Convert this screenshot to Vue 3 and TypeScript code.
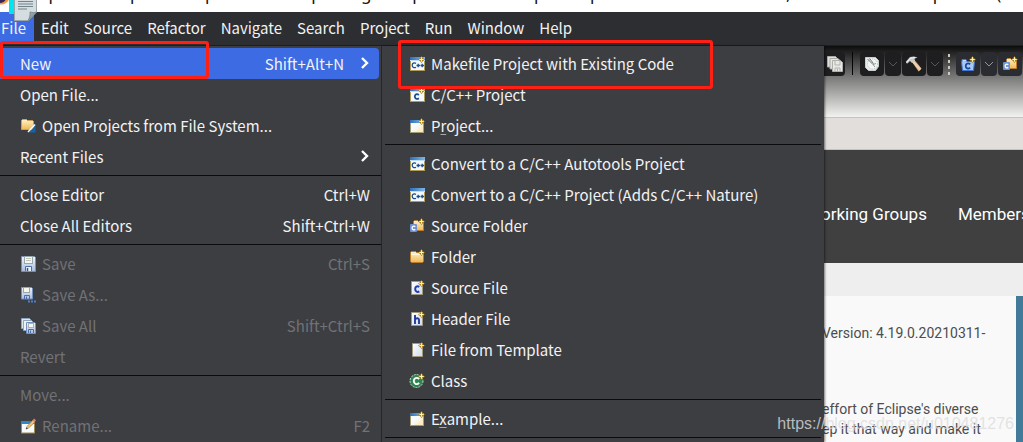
<script setup lang="ts">
interface Entry {
  label?: string
  before?: string
  key?: string
  after?: string
  icon?: string
  shortcut?: string
  arrow?: boolean
  disabled?: boolean
  active?: boolean
  separator?: boolean
}

const menus: string[] = ['File', 'Edit', 'Source', 'Refactor', 'Navigate', 'Search', 'Project', 'Run', 'Window', 'Help']

const fileMenu: Entry[] = [
  { label: 'New', shortcut: 'Shift+Alt+N', arrow: true, active: true },
  { label: 'Open File...' },
  { label: 'Open Projects from File System...', icon: 'open-projects' },
  { label: 'Recent Files', arrow: true },
  { separator: true },
  { label: 'Close Editor', shortcut: 'Ctrl+W' },
  { label: 'Close All Editors', shortcut: 'Shift+Ctrl+W' },
  { separator: true },
  { label: 'Save', icon: 'save', shortcut: 'Ctrl+S', disabled: true },
  { label: 'Save As...', icon: 'save-as', disabled: true },
  { label: 'Save All', icon: 'save-all', shortcut: 'Shift+Ctrl+S', disabled: true },
  { label: 'Revert', disabled: true },
  { separator: true },
  { label: 'Move...', disabled: true },
  { label: 'Rename...', icon: 'rename', shortcut: 'F2', disabled: true },
]

const newMenu: Entry[] = [
  { label: 'Makefile Project with Existing Code', icon: 'new-cpp' },
  { label: 'C/C++ Project', icon: 'new-c' },
  { before: 'P', key: 'r', after: 'oject...', icon: 'wizard' },
  { separator: true },
  { label: 'Convert to a C/C++ Autotools Project', icon: 'cpp' },
  { label: 'Convert to a C/C++ Project (Adds C/C++ Nature)', icon: 'cpp' },
  { label: 'Source Folder', icon: 'source-folder' },
  { label: 'Folder', icon: 'folder' },
  { label: 'Source File', icon: 'source-file' },
  { label: 'Header File', icon: 'header-file' },
  { label: 'File from Template', icon: 'file' },
  { label: 'Class', icon: 'class' },
  { separator: true },
  { before: 'E', key: 'x', after: 'ample...', icon: 'wizard' },
  { separator: true },
]
</script>

<template>
  <svg class="defs" aria-hidden="true">
    <defs>
      <linearGradient id="g-folder" x1="0" y1="0" x2="0" y2="1">
        <stop offset="0" stop-color="#fff3cf" /><stop offset="1" stop-color="#f0b850" />
      </linearGradient>
      <linearGradient id="g-title" x1="0" y1="0" x2="1" y2="0">
        <stop offset="0" stop-color="#2f6fb4" /><stop offset="1" stop-color="#7fb6e6" />
      </linearGradient>
      <linearGradient id="g-disk" x1="0" y1="0" x2="0" y2="1">
        <stop offset="0" stop-color="#eef3f8" /><stop offset="1" stop-color="#a9bde0" />
      </linearGradient>
      <linearGradient id="g-page" x1="0" y1="0" x2="1" y2="1">
        <stop offset="0" stop-color="#ffffff" /><stop offset="1" stop-color="#ccdcf0" />
      </linearGradient>
      <linearGradient id="g-win" x1="0" y1="0" x2="1" y2="1">
        <stop offset="0.4" stop-color="#f6fbff" /><stop offset="1" stop-color="#ffe9b0" />
      </linearGradient>
    </defs>
    <symbol id="i-spark" viewBox="0 0 16 16">
      <path d="M12.500 0 14 2.200 16 3.500 14 5 12.500 7 11 5 9 3.500 11 2.200Z" fill="#a87c12" />
      <path d="M12.500 1.300v4.400M10.300 3.500h4.400" stroke="#fff6a8" stroke-width="1.100" />
    </symbol>
    <symbol id="i-window" viewBox="0 0 16 16">
      <rect x="1.500" y="1.500" width="14" height="13" fill="#f4faff" stroke="#b09a58" />
      <rect x="1" y="1" width="15" height="3" fill="url(#g-title)" />
      <rect x="1" y="4" width="15" height="1" fill="#c4dcf0" />
    </symbol>
    <symbol id="i-cpp-mark" viewBox="0 0 16 16">
      <path d="M7 7.400C5 6.200 3.200 7.400 3.200 9.300s1.800 3.100 3.800 1.900M7.500 9.500h3.500M9.200 7.800v3.400M11.500 9.500h3.500M13.200 7.800v3.400" fill="none" stroke="#1f4d87" stroke-width="1.300" />
    </symbol>
    <symbol id="i-cpp" viewBox="0 0 16 16"><use href="#i-window" /><use href="#i-cpp-mark" /></symbol>
    <symbol id="i-new-cpp" viewBox="0 0 16 16"><use href="#i-window" /><use href="#i-cpp-mark" /><use href="#i-spark" /></symbol>
    <symbol id="i-new-c" viewBox="0 0 16 16">
      <use href="#i-window" />
      <path d="M9.900 8C7.800 6.300 5.800 7.500 5.800 9.500s2 3.300 4.100 1.700" fill="none" stroke="#1f4d87" stroke-width="1.800" />
      <use href="#i-spark" />
    </symbol>
    <symbol id="i-wizard" viewBox="0 0 16 16">
      <rect x="1.500" y="2.500" width="13" height="12" fill="url(#g-win)" stroke="#a39a78" />
      <path d="M5 14c5-1 8-4 9-8v8Z" fill="#fbecc0" />
      <rect x="1" y="2" width="13" height="3" fill="url(#g-title)" />
      <use href="#i-spark" />
    </symbol>
    <symbol id="i-folder-base" viewBox="0 0 16 16">
      <path d="M1.500 12.500v-9l1-1h4l1 1h6l1 1v8l-1 1h-11Z" fill="url(#g-folder)" stroke="#bd7b2c" />
      <path d="M2 5.500h12" stroke="#fff8df" />
    </symbol>
    <symbol id="i-folder" viewBox="0 0 16 16"><use href="#i-folder-base" /><use href="#i-spark" /></symbol>
    <symbol id="i-source-folder" viewBox="0 0 16 16">
      <path d="M4.500 12.500v-9l1-1h3l1 1h4l1 1v8Z" fill="url(#g-folder)" stroke="#bd7b2c" />
      <rect x="1" y="6" width="7" height="8" rx="1" fill="#6f92d2" />
      <path d="M6.300 8.600C4.400 7.400 3.100 8.600 3.100 10s1.300 2.600 3.200 1.400" fill="none" stroke="#fff" stroke-width="1.300" />
      <use href="#i-spark" />
    </symbol>
    <symbol id="i-open-projects" viewBox="0 0 16 16">
      <path d="M1.500 11.500v-9l1-1h4l1 1h5l1 1v8Z" fill="url(#g-folder)" stroke="#d4a050" />
      <path d="M9 14.500 15.500 7v7.500Z" fill="#1763a8" />
      <path d="M8 14 15 6.500" stroke="#f8fbff" stroke-width="1.500" />
    </symbol>
    <symbol id="i-save" viewBox="0 0 16 16">
      <path d="M1.500 .500h13l1 1v14h-14Z" fill="url(#g-disk)" stroke="#738fbd" />
      <rect x="4.500" y=".500" width="8" height="7" fill="#f5f7ee" stroke="#9aa6aa" />
      <path d="M6 2.500h5M6 4.500h5" stroke="#bdc5bd" />
      <path d="M5.500 15v-4.500h6V15" fill="#e9f0fa" stroke="#4d6fa8" />
      <path d="M7.500 12v3" stroke="#35558f" stroke-width="1.500" />
    </symbol>
    <symbol id="i-save-as" viewBox="0 0 16 16">
      <path d="M1.500 .500h10l1 1v10.500h-11Z" fill="url(#g-disk)" stroke="#738fbd" />
      <rect x="3.500" y=".500" width="6" height="5" fill="#f5f7ee" stroke="#9aa6aa" />
      <path d="M4.500 12V8.500h5V12M6.500 9.500V12" fill="none" stroke="#4d6fa8" />
      <path d="M8 14.500h2M11 14.500h2M14 14.500h2" stroke="#4c7ed0" stroke-width="2" />
    </symbol>
    <symbol id="i-save-all" viewBox="0 0 16 16">
      <path d="M1.500 .500h8l1 1v9h-9Z" fill="#dce6ef" stroke="#8fa6bd" />
      <path d="M3.500 2.500h8l1 1v9h-9Z" fill="#eef2f2" stroke="#8fa6bd" />
      <path d="M6.500 4.500h8l1 1v10h-9Z" fill="url(#g-disk)" stroke="#738fbd" />
      <rect x="8.500" y="5.500" width="5" height="4" fill="#f5f7ee" stroke="#aab4b6" />
      <path d="M8.500 15v-3.500h5V15M10.500 12.500V15" fill="none" stroke="#4d6fa8" />
    </symbol>
    <symbol id="i-rename" viewBox="0 0 16 16">
      <rect x="1.500" y="3.500" width="13" height="11.500" fill="#f4fbff" stroke="#a08a55" />
      <rect x="1" y="3" width="14" height="3" fill="#2e86c8" />
      <path d="M6 11 7 8.500 13 2l2 2-6.500 6Z" fill="#f3c678" stroke="#a5763a" stroke-width=".700" />
      <path d="M12.500 2.500 14 .500l2 1.700-1.500 2Z" fill="#d9807a" />
      <path d="m6 11.300.700-1.700 1 1Z" fill="#222" />
    </symbol>
    <symbol id="i-file" viewBox="0 0 16 16">
      <path d="M3.500 1.500h10v13h-10Z" fill="url(#g-page)" stroke="#a3987a" />
      <use href="#i-spark" />
    </symbol>
    <symbol id="i-source-file" viewBox="0 0 16 16">
      <path d="M2.500 1.500h11v13h-11Z" fill="url(#g-page)" stroke="#a3987a" />
      <path d="M10.300 6.800C8 5.400 6.200 6.800 6.200 9s1.800 3.800 4.100 2.300" fill="none" stroke="#2638b0" stroke-width="2" />
      <use href="#i-spark" />
    </symbol>
    <symbol id="i-header-file" viewBox="0 0 16 16">
      <path d="M2.500 1.500h11v13h-11Z" fill="url(#g-page)" stroke="#a3987a" />
      <path d="M6 4v9M6 8.500c1-1.800 4-1.800 4 .300V13" fill="none" stroke="#263c98" stroke-width="1.900" />
      <use href="#i-spark" />
    </symbol>
    <symbol id="i-class" viewBox="0 0 16 16">
      <circle cx="7.500" cy="8" r="6.500" fill="#2f8550" stroke="#b9dcc2" stroke-dasharray="2 1" />
      <path d="M10.200 5.900C7.600 3.800 4.800 5.400 4.800 8s2.800 4.200 5.400 2.100" fill="none" stroke="#fff" stroke-width="1.900" />
      <use href="#i-spark" />
    </symbol>
    <symbol id="i-new-class-project" viewBox="0 0 16 16">
      <path d="M1.500 5.500h13l-1 9h-11Z" fill="#a9c8f6" stroke="#3f74d0" />
      <path d="M2 6V3.500h4L7 5.500" fill="#c9dcf8" stroke="#3f74d0" />
      <path d="M10.200 8.200C8 6.600 5.700 7.800 5.700 10s2.300 3.400 4.500 1.800" fill="none" stroke="#174a9c" stroke-width="1.800" />
      <use href="#i-spark" />
    </symbol>
    <symbol id="i-disks" viewBox="0 0 16 16">
      <path d="M.500 .500h8l1.500 1.500v9H.500Z" fill="#dededb" stroke="#aaa9a5" />
      <path d="M3 2.500h8L12.500 4v9H3Z" fill="#e4e4e1" stroke="#aaa9a5" />
      <path d="M5.500 4.500h8l2 2v9h-10Z" fill="#e8e8e5" stroke="#b0afab" />
      <path d="M8 5v4h5V5M8 15v-3h5v3M10.500 12.500V15" fill="none" stroke="#b2b1ad" />
    </symbol>
    <symbol id="i-launch" viewBox="0 0 16 16">
      <path d="M1.500 1.500h10l3 3v6l-3 4h-7l-3-3Z" fill="#e6eae8" stroke="#c9d0cc" />
      <circle cx="8.500" cy="8" r="5" fill="#f4f6f5" stroke="#b4bdb9" stroke-dasharray="1 1.500" />
      <path d="m3.500 3 5.500 5.500M5.500 2.500 9.500 7.500" stroke="#69736f" />
      <path d="M9 8.500 11 11M9 8.500l3-1" stroke="#8b9691" />
    </symbol>
    <symbol id="i-hammer" viewBox="0 0 16 16">
      <path d="m6 6 2.500-2 7 8.500-2.800 3Z" fill="#dcb48c" />
      <path d="m6 6 1.500-1.500L15 13l-1.500 1.500Z" fill="#f0cfaa" />
      <path d="M0 7V5.500L4 1l4-.500 3.500 1-3 1.200.500 2L6 7 4 5 1.500 7.500Z" fill="#c8cac9" />
      <path d="M1 6 4.500 2.200 9 1.500" fill="none" stroke="#f0f2f1" />
    </symbol>
  </svg>

  <div class="screen">
    <header class="title">
      <svg class="title-logo" width="10" height="5" viewBox="0 0 10 5" aria-hidden="true">
        <path d="M-7-6H10C10 1 6 5 0 4.500Z" fill="#f39a3c" />
        <path d="M-7-6H7C7 0 4 3 0 3Z" fill="#35255c" />
      </svg>
      <span class="title-text">eclipse-workspace - https://www.eclipse.org/setups/donate/?scope=Eclipse IDE 2021-03 R 4.19.0, Version 4.19 Setup items (</span>
      <i class="cyan"></i>
      <svg class="doc" width="24" height="21" viewBox="0 0 24 21" aria-hidden="true">
        <path d="M.500-1h22v13l-8 8.500H.500Z" fill="#d5dde0" stroke="#9aa6aa" />
        <path d="M22.500 12c-2 1-4 .500-6.500 0 .500 3-.500 6-2 8.500Z" fill="#8fa2a8" stroke="#7b8c92" />
        <path d="M4 1.500h15M4 4h15M4 6.500h15M4 9h9" stroke="#73858c" />
      </svg>
    </header>

    <nav class="menubar">
      <button v-for="(m, i) in menus" :key="m" type="button" :class="{ open: i === 0 }">{{ m }}</button>
    </nav>

    <main class="body">
      <div v-for="(list, n) in [fileMenu, newMenu]" :key="n" class="menu" :class="n === 0 ? 'file-menu' : 'new-menu'" role="menu">
        <template v-for="(e, i) in list" :key="i">
          <hr v-if="e.separator" />
          <button v-else type="button" class="item" role="menuitem" :class="{ active: e.active }" :disabled="e.disabled">
            <svg v-if="e.icon" class="icon" width="16" height="16" aria-hidden="true"><use :href="'#i-' + e.icon" /></svg>
            <span v-if="e.label" class="label">{{ e.label }}</span>
            <span v-else class="label">{{ e.before }}<u>{{ e.key }}</u>{{ e.after }}</span>
            <span v-if="e.shortcut" class="shortcut">{{ e.shortcut }}</span>
            <svg v-if="e.arrow" class="arrow" width="8" height="14" viewBox="0 0 8 14" aria-hidden="true">
              <path d="m1 2 5 5-5 5" fill="none" stroke="#fff" stroke-width="2.400" />
            </svg>
          </button>
        </template>
      </div>

      <section class="workbench">
        <div class="toolbar">
          <button type="button" class="tool cut" aria-label="Save All"><svg width="16" height="16"><use href="#i-disks" /></svg></button>
          <i class="rule"></i>
          <button type="button" class="tool" aria-label="Launch"><svg width="16" height="16"><use href="#i-launch" /></svg></button>
          <button type="button" class="drop" aria-label="Launch options"><svg width="10" height="6" viewBox="0 0 10 6"><path d="m1 1 4 4 4-4" /></svg></button>
          <button type="button" class="tool" aria-label="Build"><svg width="16" height="16"><use href="#i-hammer" /></svg></button>
          <button type="button" class="drop" aria-label="Build options"><svg width="10" height="6" viewBox="0 0 10 6"><path d="m1 1 4 4 4-4" /></svg></button>
          <i class="handle"></i>
          <button type="button" class="tool lit" aria-label="New project"><svg width="16" height="16"><use href="#i-new-class-project" /></svg></button>
          <button type="button" class="drop lit" aria-label="New project options"><svg width="10" height="6" viewBox="0 0 10 6"><path d="m1 1 4 4 4-4" /></svg></button>
          <button type="button" class="tool lit" aria-label="New source folder"><svg width="16" height="16"><use href="#i-source-folder" /></svg></button>
        </div>
        <div class="tabs"></div>
        <nav class="site-nav"><a href="#">orking Groups</a><a href="#">Members</a></nav>
        <div class="band"></div>
        <article class="page">
          <p>Version: 4.19.0.20210311-</p>
          <p>effort of Eclipse's diverse<br />ep it that way and make it</p>
        </article>
      </section>
    </main>

    <div class="mark mark-new"></div>
    <div class="mark mark-makefile"></div>
    <div class="watermark">https://blog.csdn.net/u010481276</div>
  </div>
</template>

<style>
body { overflow: hidden; }
</style>

<style scoped>
.defs { position: absolute; width: 0; height: 0; }
.screen {
  position: relative;
  display: flex;
  flex-direction: column;
  height: 100vh;
  overflow: hidden;
  font: 15px/24px "Noto Sans CJK SC", sans-serif;
  color: #f2f2f2;
  background: #3d3e42;
}
button { margin: 0; padding: 0; border: 0; background: none; font: inherit; color: inherit; white-space: nowrap; }
p { margin: 0; }

.title { position: relative; z-index: 2; display: flex; flex: none; align-items: flex-end; height: 12px; background: #fff; color: #111; }
.title-logo { position: absolute; left: 0; top: 0; }
.title-text { flex: 1; min-width: 0; height: 30px; padding-left: 22px; overflow: hidden; white-space: nowrap; font: 17px/24px "Noto Sans", sans-serif; }
.cyan { position: absolute; left: 9px; top: 0; width: 7px; height: 14px; background: #00e5ee; }
.doc { position: absolute; left: 14px; top: 0; }

.menubar { display: flex; flex: none; height: 33px; margin-left: -6px; background: #2d2e32; border-bottom: 1px solid #1d1e20; }
.menubar button { height: 31px; padding: 0 8px 0 7px; line-height: 32px; }
.menubar .open { background: #3d6be4; }

.body { display: flex; flex: 1; min-height: 0; }
.menu { flex: none; box-sizing: border-box; padding-top: 2px; background: #3d3e42; }
.file-menu { width: 382px; border-right: 1px solid #27282b; }
.new-menu { width: 442px; z-index: 1; box-shadow: 1px 0 2px rgba(0, 0, 0, 0.5); }
.item { display: flex; align-items: center; width: 100%; height: 31px; text-align: left; }
.file-menu .item { width: 379px; padding: 0 9px 0 20px; }
.new-menu .item { padding-left: 27px; }
.item.active { background: #3d6be4; border-radius: 0 4px 4px 0; }
.item:disabled { color: #717276; }
.icon { flex: none; margin-right: 6px; }
.label { flex: 1; line-height: 31px; }
.label u { text-decoration: underline; text-decoration-color: #aaa; text-underline-offset: 2px; }
.arrow { flex: none; margin: 0 1px 2px 17px; }
hr { height: 1px; margin: 3px 0; border: 0; background: #0c0c0e; }
.new-menu hr { margin: 3px; }

.workbench { display: flex; flex: 1; flex-direction: column; min-width: 0; overflow: hidden; }
.toolbar { display: flex; flex: none; height: 65px; padding-top: 6px; background: linear-gradient(#0d0d0d, #777 43%, #f2f2f0); border-bottom: 1px solid #c5c2bf; }
.tool, .drop { display: flex; flex: none; align-items: center; justify-content: center; width: 24px; height: 24px; margin-right: 1px; border-radius: 4px; background: #1e1e20; }
.tool.cut { width: 21px; margin-right: 7px; border-radius: 0 4px 4px 0; }
.drop { width: 16px; }
.drop path { fill: none; stroke: #55565a; }
.lit { background: #2b2c31; }
.drop.lit path { stroke: #94959a; }
.rule { flex: none; width: 1px; height: 23px; margin-right: 7px; background: #050505; }
.handle { flex: none; width: 2px; height: 21px; margin: 2px 6px 0 4px; background: repeating-linear-gradient(#ccc8c0 0 3px, transparent 3px 6px); }
.tabs { flex: none; height: 31px; background: #e1dedb; border-bottom: 1px solid #c5c2bf; }
.site-nav { display: flex; flex: none; gap: 31px; height: 113px; padding-right: 3px; margin-left: -3px; background: #404040; line-height: 128px; font-family: Roboto, sans-serif; font-size: 17px; }
.site-nav a { color: #fff; text-decoration: none; white-space: nowrap; }
.band { flex: none; height: 33px; background: #eee; }
.page { flex: 1; margin-left: -2px; padding-top: 27px; border-right: 7px solid #427b99; background: #f9f9f9; color: #4c4d4e; font: 14px/20px Roboto, sans-serif; white-space: nowrap; }
.page p + p { margin-top: 56px; }

.mark { position: absolute; z-index: 3; box-sizing: border-box; border: 3px solid #ff2015; border-radius: 3px; }
.mark-new { left: 0; top: 41px; width: 209px; height: 38px; }
.mark-makefile { left: 398px; top: 40px; width: 315px; height: 49px; }
.watermark { position: absolute; z-index: 3; right: 9px; bottom: 8px; color: rgba(220, 220, 220, 0.8); font: 16px/20px "Liberation Sans", sans-serif; }
</style>
